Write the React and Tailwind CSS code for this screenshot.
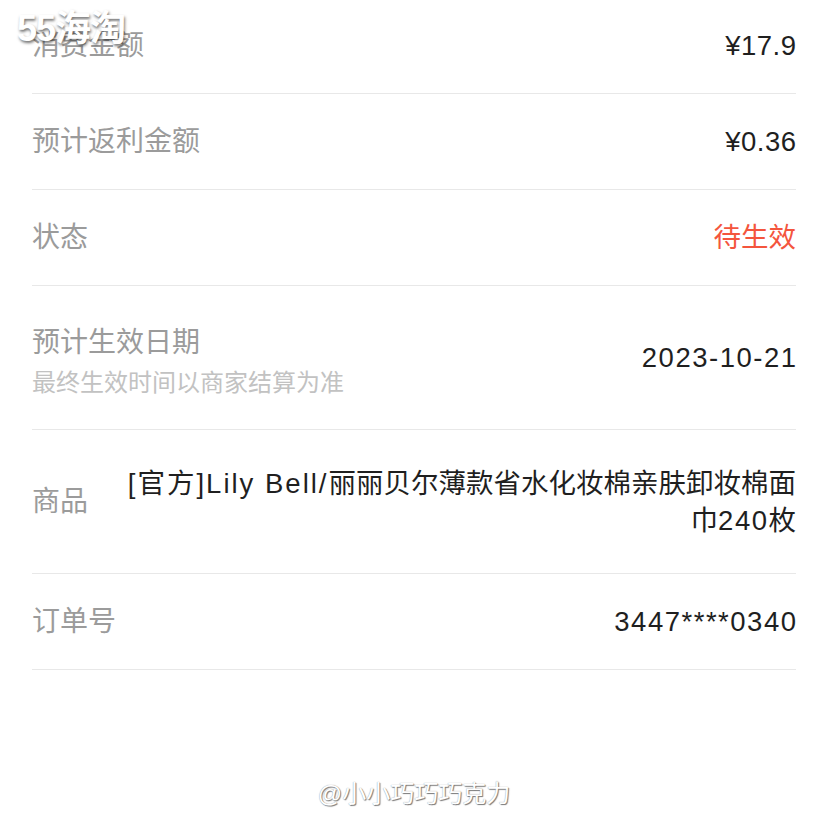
const font = { fontFamily: '"Liberation Sans", "Noto Sans CJK SC", sans-serif' };

const Row = ({ label, sub, value, valueClass = "text-[#1f1f1f] tracking-[1.5px] -mr-[1.5px]", height = "h-[96px]" }) => (
  <div className={`flex items-center justify-between border-b border-[#e8e8e8] ${height}`}>
    <div className={`flex flex-col shrink-0 ${sub ? "pt-[8px]" : ""}`}>
      <span className="text-[28px] leading-[34px] text-[#9b9b9b]">{label}</span>
      {sub && <span className="mt-[8px] text-[24px] leading-[30px] text-[#c2c2c2]">{sub}</span>}
    </div>
    <div className={`text-right text-[27.5px] leading-[37px] ${valueClass}`}>{value}</div>
  </div>
);

export default function App() {
  return (
    <div className="relative w-[828px] h-[828px] overflow-hidden bg-white" style={font}>
      <div className="mx-[32px] -mt-[2px]">
        <Row label="消费金额" value="¥17.9" valueClass="text-[#1f1f1f] tracking-[0.5px] -mr-[0.5px]" />
        <Row label="预计返利金额" value="¥0.36" valueClass="text-[#1f1f1f] tracking-[0.5px] -mr-[0.5px]" />
        <Row label="状态" value="待生效" valueClass="text-[#f4553d]" />
        <Row
          label="预计生效日期"
          sub="最终生效时间以商家结算为准"
          value="2023-10-21"
          height="h-[144px]"
        />
        <div className="flex items-center justify-between border-b border-[#e8e8e8] h-[144px]">
          <span className="shrink-0 text-[28px] text-[#9b9b9b]">商品</span>
          <div className="pl-[30px] text-right text-[27.5px] leading-[37px] text-[#1f1f1f]">
            <span className="tracking-[2px]">[官方]Lily Bell/</span>丽丽贝尔薄款省水化妆棉亲肤卸妆棉面
            <br />
            巾<span className="tracking-[1.5px]">240</span>枚
          </div>
        </div>
        <Row label="订单号" value="3447****0340" />
      </div>

      <div
        className="absolute left-[17px] top-[11px] text-[36px] font-bold leading-none text-white tracking-[-1px]"
        style={{ textShadow: "1px 2px 3px rgba(0,0,0,0.55)" }}
      >
        55海淘
      </div>
      <div
        className="absolute left-0 right-0 top-[776px] text-center text-[24px] text-white"
        style={{ textShadow: "0 0 1px #888, 1px 1px 1px #777" }}
      >
        @小小巧巧巧克力
      </div>
    </div>
  );
}
